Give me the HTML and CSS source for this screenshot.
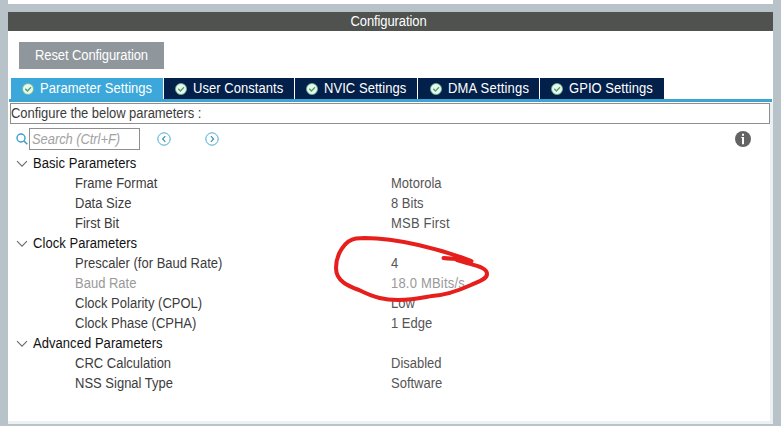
FILE: index.html
```html
<!DOCTYPE html>
<html lang="en">
<head>
<meta charset="utf-8">
<title>Configuration</title>
<link rel="stylesheet" href="styles.css">
</head>
<body>
<svg class="defs" aria-hidden="true">
  <symbol id="check" viewBox="0 0 12 12"><circle cx="6" cy="6" r="5.5" fill="#e9f8ec" stroke="#69b58a" stroke-width=".8"/><path d="M3.3 5.8l2.1 2.2 3.6-3.8" fill="none" stroke="#4b9e70" stroke-width="1.3"/></symbol>
  <symbol id="chevron" viewBox="0 0 12 8"><path d="M1 1.2l5 5 5-5" fill="none" stroke="#6e6e6e" stroke-width="1.2"/></symbol>
</svg>
<div class="window">
  <main class="panel">
    <h1 class="title"><span>Configuration</span></h1>
    <div class="actions"><button class="reset"><span>Reset Configuration</span></button></div>
    <nav class="tabs">
      <div class="tab active w1"><svg><use href="#check"/></svg><span>Parameter Settings</span></div>
      <div class="tab w2"><svg><use href="#check"/></svg><span>User Constants</span></div>
      <div class="tab w3"><svg><use href="#check"/></svg><span>NVIC Settings</span></div>
      <div class="tab w4"><svg><use href="#check"/></svg><span>DMA Settings</span></div>
      <div class="tab w5"><svg><use href="#check"/></svg><span>GPIO Settings</span></div>
    </nav>
    <div class="content">
      <div class="hint"><span>Configure the below parameters :</span></div>
      <div class="toolbar">
        <svg class="glass" viewBox="0 0 12 12"><circle cx="5" cy="5" r="4" fill="none" stroke="#3a9fcd" stroke-width="1.4"/><path d="M8 8l3.3 3.3" stroke="#3a9fcd" stroke-width="1.6"/></svg>
        <div class="search"><span>Search (Ctrl+F)</span></div>
        <svg class="prev" viewBox="0 0 14 14"><circle cx="7" cy="7" r="6.2" fill="none" stroke="#4ba9cf"/><path d="M8.3 4.2L5.6 7l2.7 2.8" fill="none" stroke="#3292c0" stroke-width="1.2"/></svg>
        <svg class="next" viewBox="0 0 14 14"><circle cx="7" cy="7" r="6.2" fill="none" stroke="#4ba9cf"/><path d="M5.9 4.2L8.6 7 5.9 9.8" fill="none" stroke="#3292c0" stroke-width="1.2"/></svg>
        <svg class="info" viewBox="0 0 16 16"><circle cx="8" cy="8" r="8" fill="#636363"/><path d="M7 2.8h2v2H7zM6.3 6H9v7.3H7V7h-.7z" fill="#fff"/></svg>
      </div>
      <div class="tree">
        <div class="group"><svg><use href="#chevron"/></svg><span>Basic Parameters</span></div>
        <div class="row"><span>Frame Format</span><span class="value">Motorola</span></div>
        <div class="row"><span>Data Size</span><span class="value">8 Bits</span></div>
        <div class="row"><span>First Bit</span><span class="value loose">MSB First</span></div>
        <div class="group"><svg><use href="#chevron"/></svg><span>Clock Parameters</span></div>
        <div class="row"><span>Prescaler (for Baud Rate)</span><span class="value">4</span></div>
        <div class="row muted"><span>Baud Rate</span><span class="value">18.0 MBits/s</span></div>
        <div class="row"><span>Clock Polarity (CPOL)</span><span class="value">Low</span></div>
        <div class="row"><span>Clock Phase (CPHA)</span><span class="value">1 Edge</span></div>
        <div class="group"><svg><use href="#chevron"/></svg><span>Advanced Parameters</span></div>
        <div class="row"><span>CRC Calculation</span><span class="value">Disabled</span></div>
        <div class="row"><span>NSS Signal Type</span><span class="value">Software</span></div>
      </div>
    </div>
  </main>
</div>
<svg class="annotation" viewBox="320 225 180 85"><path d="M471.500 261 C440 249 397 238 365 238 L356 238.500 C345 240 336 254 336 268 C336 281 348 286 359 290 C375 298 385 300 398 300 C415 300 425 297 432 296 C448 295 460 290 471 285 C480 281 487 279 487 274 C487 268 478 266 467 263 L457 260 M443.500 258 C452 259 462 259 471 261" fill="none" stroke="#e61f1d" stroke-width="4" stroke-linecap="round" stroke-linejoin="round"/></svg>
</body>
</html>
```

FILE: styles.css
```css
* { box-sizing: border-box; }
body { margin: 0; height: 436px; overflow: hidden; position: relative; background: #fff; font: 13px/20px "Liberation Sans", Arial, sans-serif; color: #3c3c3c; }
svg { display: block; flex: none; }
span { display: inline-block; white-space: nowrap; transform: scaleY(1.08); }
.defs { width: 0; height: 0; position: absolute; }
.window { width: 781px; height: 426px; border: solid #b7c3c9; border-width: 0 8px 2px; padding-top: 4px; background: #fff; }
.panel { height: 420px; border-top: 8px solid #b7c3c9; border-bottom: 3px solid #ebf0f3; }
.title { margin: 0; height: 19px; background: #50524f; color: #fff; font-size: 13px; font-weight: 400; line-height: 19px; text-align: center; padding-right: 4px; letter-spacing: -.1px; }
.actions { height: 47px; padding: 11px 0 0 11px; }
.reset { display: block; width: 145px; height: 27px; border: 0; padding: 0; background: #8f979c; color: #fff; font: inherit; letter-spacing: -.1px; }
.tabs { display: flex; gap: 1px; height: 24px; margin: 0 1px; padding-left: 2px; border-bottom: 3px solid #40a4d3; }
.tab { display: flex; align-items: center; gap: 6px; height: 21px; padding-left: 11px; background: #03204a; color: #fff; letter-spacing: .05px; }
.tab svg { width: 12px; height: 12px; }
.active { background: #3ba7da; }
.w1 { width: 152px; } .w2 { width: 130px; } .w3 { width: 122px; } .w4 { width: 121px; padding-left: 12px; letter-spacing: .2px; } .w5 { width: 124px; }
.content { height: 319px; padding: 1px 0 0 2px; border-right: 3px solid #ebf0f3; }
.hint { height: 21px; border: 1px solid #8c8f91; line-height: 19px; letter-spacing: -.06px; }
.toolbar { display: flex; align-items: center; height: 30px; padding: 0 19px 0 6px; }
.glass { width: 12px; height: 12px; margin-right: 1px; }
.search { width: 111px; height: 22px; border: 1px solid #8c9092; padding-left: 2px; line-height: 21px; font-style: italic; color: #a2a2a2; letter-spacing: -.08px; }
.prev, .next { width: 14px; height: 14px; }
.prev { margin-left: 17px; }
.next { margin-left: 34px; }
.info { width: 16px; height: 16px; margin-left: auto; }
.group { display: flex; align-items: center; height: 20px; padding-left: 6px; gap: 5px; color: #111; letter-spacing: .05px; }
.group svg { width: 12px; height: 8px; }
.row { display: grid; grid-template-columns: 316px 1fr; height: 20px; padding-left: 65px; }
.row span { transform-origin: left center; }
.value { color: #555; }
.loose { letter-spacing: .2px; }
.muted, .muted .value { color: #999; }
.muted .value { letter-spacing: .2px; }
.annotation { position: absolute; left: 320px; top: 225px; width: 180px; height: 85px; }
```
